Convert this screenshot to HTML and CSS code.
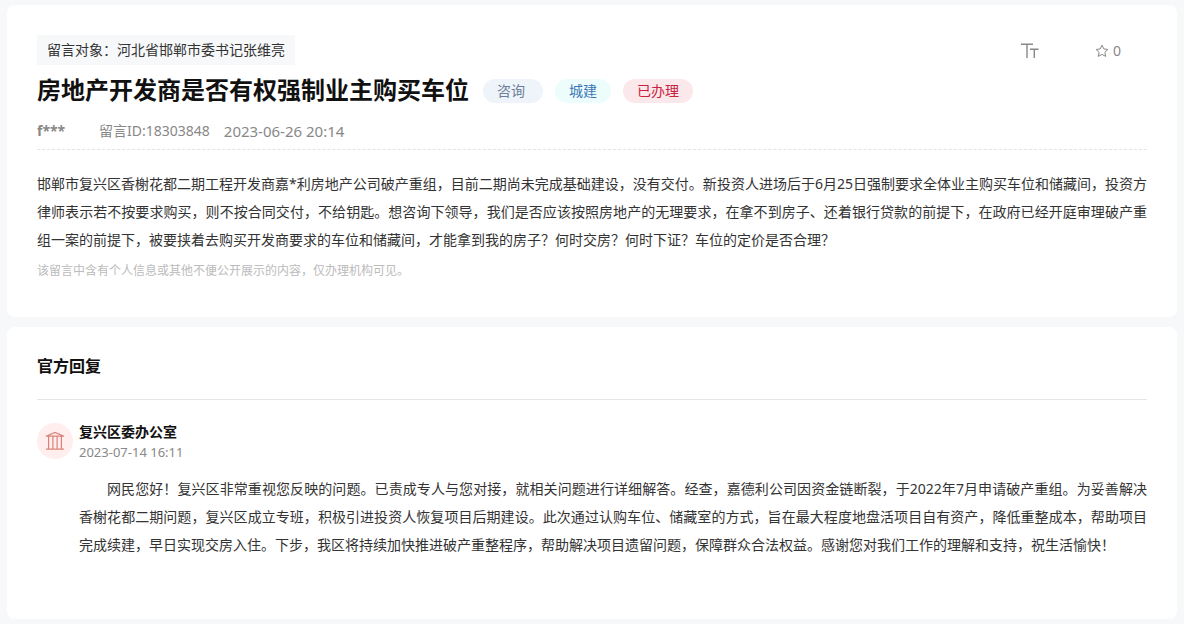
FILE: index.html
```
<!DOCTYPE html>
<html lang="zh-CN">
<head>
    <meta charset="UTF-8">
    <meta name="viewport" content="width=device-width, initial-scale=1.0">
    <title>房地产开发商是否有权强制业主购买车位</title>
    <link rel="stylesheet" href="styles.css">
</head>
<body>

<main class="page">
    <article class="card">
        <div class="top-bar">
            <span class="target">留言对象：河北省邯郸市委书记张维亮</span>
            <div class="tools">
                <button type="button" class="tool-btn" aria-label="字号">
                    <svg width="18" height="16" viewBox="0 0 18 16" fill="none" stroke="currentColor" stroke-width="1.4">
                        <path d="M0 1.2H12M6 1.2V15M9 6.2H17.5M13.3 6.2V15"/>
                    </svg>
                </button>
                <button type="button" class="tool-btn" aria-label="收藏">
                    <svg width="14" height="14" viewBox="0 0 14 14" fill="none" stroke="currentColor" stroke-width="1" stroke-linejoin="round">
                        <path d="M7 1.2L8.8 4.9L12.9 5.5L9.9 8.3L10.7 12.4L7 10.4L3.3 12.4L4.1 8.3L1.1 5.5L5.2 4.9Z"/>
                    </svg>
                    <span>0</span>
                </button>
            </div>
        </div>
        <div class="title-row">
            <h1>房地产开发商是否有权强制业主购买车位</h1>
            <span class="tag tag-type">咨询</span>
            <span class="tag tag-field">城建</span>
            <span class="tag tag-state">已办理</span>
        </div>
        <div class="meta">
            <span class="user">f***</span>
            <span>留言ID:18303848</span>
            <time>2023-06-26 20:14</time>
        </div>
        <p class="content">邯郸市复兴区香榭花都二期工程开发商嘉*利房地产公司破产重组，目前二期尚未完成基础建设，没有交付。新投资人进场后于6月25日强制要求全体业主购买车位和储藏间，投资方律师表示若不按要求购买，则不按合同交付，不给钥匙。想咨询下领导，我们是否应该按照房地产的无理要求，在拿不到房子、还着银行贷款的前提下，在政府已经开庭审理破产重组一案的前提下，被要挟着去购买开发商要求的车位和储藏间，才能拿到我的房子？何时交房？何时下证？车位的定价是否合理？</p>
        <p class="notice">该留言中含有个人信息或其他不便公开展示的内容，仅办理机构可见。</p>
    </article>

    <section class="card">
        <h2>官方回复</h2>
        <div class="reply">
            <div class="avatar">
                <svg width="20" height="20" viewBox="0 0 20 20" fill="none" stroke="currentColor" stroke-width="1.2">
                    <path d="M1 5.2L10 1.4L19 5.2ZM3.6 5.2V18M7.9 5.2V18M12.1 5.2V18M16.4 5.2V18M1 18.2H19"/>
                </svg>
            </div>
            <div class="reply-main">
                <h3>复兴区委办公室</h3>
                <time>2023-07-14 16:11</time>
                <p class="content reply-text">网民您好！复兴区非常重视您反映的问题。已责成专人与您对接，就相关问题进行详细解答。经查，嘉德利公司因资金链断裂，于2022年7月申请破产重组。为妥善解决香榭花都二期问题，复兴区成立专班，积极引进投资人恢复项目后期建设。此次通过认购车位、储藏室的方式，旨在最大程度地盘活项目自有资产，降低重整成本，帮助项目完成续建，早日实现交房入住。下步，我区将持续加快推进破产重整程序，帮助解决项目遗留问题，保障群众合法权益。感谢您对我们工作的理解和支持，祝生活愉快！</p>
            </div>
        </div>
    </section>
</main>

</body>
</html>
```
FILE: styles.css
```
* {
    box-sizing: border-box;
}

body {
    margin: 0;
    background-color: #f7f8fa;
    color: #333;
    font-family: "Noto Sans", "Noto Sans CJK SC", sans-serif;
    font-size: 14px;
    line-height: 20px;
}

h1, h2, h3, p {
    margin: 0;
}

.page {
    display: flex;
    flex-direction: column;
    gap: 10px;
    padding: 5px 7px;
}

.card {
    padding: 30px;
    background-color: #fff;
    border-radius: 8px;
}

.top-bar {
    display: flex;
    justify-content: space-between;
    align-items: center;
}

.target {
    padding: 5px 10px;
    background-color: #f7f8fa;
}

.tools {
    display: flex;
    gap: 56px;
    padding: 2px 26px 0 0;
}

.tool-btn {
    display: flex;
    align-items: center;
    gap: 4px;
    padding: 0;
    border: none;
    background: none;
    color: #888;
    font: inherit;
    cursor: pointer;
}

/* title and tags */
.title-row {
    display: flex;
    align-items: center;
    gap: 12px;
    margin-top: 8px;
}

h1 {
    margin-right: 2px;
    padding-bottom: 2px;
    color: #111;
    font-size: 24px;
    line-height: 34px;
}

.tag {
    padding: 2px 14px;
    border-radius: 12px;
}

.tag-type {
    padding-right: 18px;
    background-color: #eff3fa;
    color: #6b7f99;
}

.tag-field {
    background-color: #edfdfc;
    color: #3a76b5;
}

.tag-state {
    background-color: #fbe8ea;
    color: #c9213f;
}

.meta {
    display: flex;
    gap: 14px;
    padding: 12px 0 8px;
    border-bottom: 1px dashed #e3e3e3;
    color: #888;
}

.meta time {
    font-size: 15px;
}

.user {
    width: 48px;
    font-weight: bold;
}

.content {
    margin-top: 20px;
    line-height: 28px;
    text-align: justify;
}

.notice {
    margin-top: 7px;
    padding-bottom: 6px;
    color: #bbb;
    font-size: 12px;
}

/* official reply */
h2 {
    padding-bottom: 24px;
    border-bottom: 1px solid #e5e5e5;
    color: #111;
    font-size: 16px;
    line-height: 18px;
}

.reply {
    display: flex;
    gap: 6px;
    padding: 23px 0 30px;
}

.avatar {
    display: flex;
    flex: none;
    justify-content: center;
    align-items: center;
    width: 36px;
    height: 36px;
    border-radius: 50%;
    background-color: #ffeeed;
    color: #d9827b;
}

.reply-main {
    flex: 1;
}

h3 {
    color: #111;
    font-size: 14px;
    line-height: 18px;
}

.reply-main time {
    display: block;
    color: #888;
    font-size: 13px;
    line-height: 22px;
}

.reply-text {
    margin-top: 12px;
    text-indent: 2em;
}
```
